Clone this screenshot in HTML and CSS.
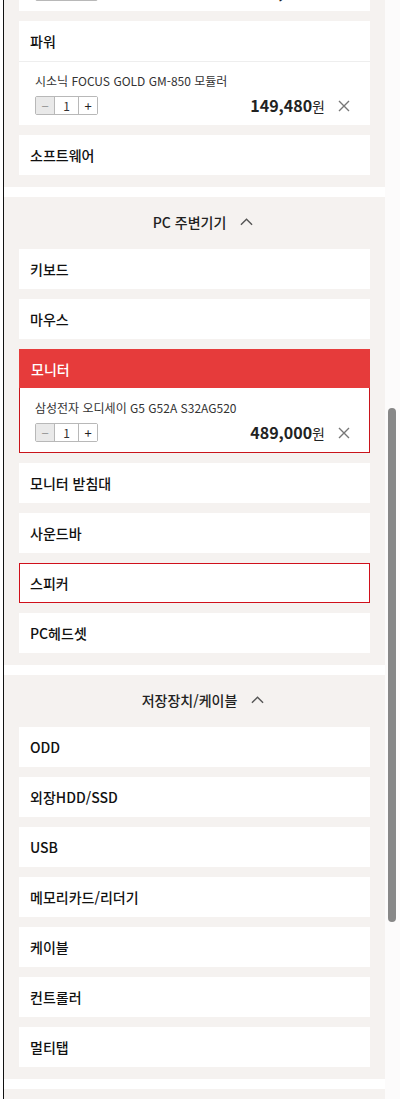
FILE: index.html
```html
<!DOCTYPE html>
<html lang="ko">
<head>
    <meta charset="UTF-8">
    <meta name="viewport" content="width=device-width, initial-scale=1.0">
    <title>견적 카테고리</title>
    <link rel="stylesheet" href="styles.css">
</head>
<body>
    <div class="frame">
        <div class="page">
            <!-- 파워 / 소프트웨어 묶음 (위쪽은 스크롤로 가려짐) -->
            <section class="group group-top">
                <div class="card">
                    <div class="card-title">케이스</div>
                    <div class="product">
                        <div class="product-name">앱코 SUITMASTER 케이스</div>
                        <div class="product-row">
                            <div class="stepper">
                                <button class="step minus">−</button>
                                <span class="qty">1</span>
                                <button class="step plus">+</button>
                            </div>
                            <div class="price"><b>59,000</b>원</div>
                            <span class="remove"><svg viewBox="0 0 12 12"><path d="M1 1L11 11M11 1L1 11"/></svg></span>
                        </div>
                    </div>
                </div>
                <div class="card">
                    <div class="card-title">파워</div>
                    <div class="product">
                        <div class="product-name">시소닉 FOCUS GOLD GM-850 모듈러</div>
                        <div class="product-row">
                            <div class="stepper">
                                <button class="step minus">−</button>
                                <span class="qty">1</span>
                                <button class="step plus">+</button>
                            </div>
                            <div class="price"><b>149,480</b>원</div>
                            <span class="remove"><svg viewBox="0 0 12 12"><path d="M1 1L11 11M11 1L1 11"/></svg></span>
                        </div>
                    </div>
                </div>
                <div class="card"><div class="card-title">소프트웨어</div></div>
            </section>

            <section class="group">
                <div class="group-head">
                    <span>PC 주변기기</span>
                    <svg class="chevron" viewBox="0 0 14 8"><path d="M1 7L7 1L13 7"/></svg>
                </div>
                <div class="card"><div class="card-title">키보드</div></div>
                <div class="card"><div class="card-title">마우스</div></div>
                <div class="card active">
                    <div class="card-title">모니터</div>
                    <div class="product">
                        <div class="product-name">삼성전자 오디세이 G5 G52A S32AG520</div>
                        <div class="product-row">
                            <div class="stepper">
                                <button class="step minus">−</button>
                                <span class="qty">1</span>
                                <button class="step plus">+</button>
                            </div>
                            <div class="price"><b>489,000</b>원</div>
                            <span class="remove"><svg viewBox="0 0 12 12"><path d="M1 1L11 11M11 1L1 11"/></svg></span>
                        </div>
                    </div>
                </div>
                <div class="card"><div class="card-title">모니터 받침대</div></div>
                <div class="card"><div class="card-title">사운드바</div></div>
                <div class="card selected"><div class="card-title">스피커</div></div>
                <div class="card"><div class="card-title">PC헤드셋</div></div>
            </section>

            <section class="group">
                <div class="group-head">
                    <span>저장장치/케이블</span>
                    <svg class="chevron" viewBox="0 0 14 8"><path d="M1 7L7 1L13 7"/></svg>
                </div>
                <div class="card"><div class="card-title">ODD</div></div>
                <div class="card"><div class="card-title">외장HDD/SSD</div></div>
                <div class="card"><div class="card-title">USB</div></div>
                <div class="card"><div class="card-title">메모리카드/리더기</div></div>
                <div class="card"><div class="card-title">케이블</div></div>
                <div class="card"><div class="card-title">컨트롤러</div></div>
                <div class="card"><div class="card-title">멀티탭</div></div>
            </section>

            <section class="group group-end"></section>
        </div>
        <div class="gutter"></div>
    </div>
    <div class="thumb"></div>
</body>
</html>
```

FILE: styles.css
```css
* {
    margin: 0;
    padding: 0;
    box-sizing: border-box;
}

body {
    font-family: "Noto Sans CJK KR", "Noto Sans", sans-serif;
    background: #fff;
    color: #111;
    width: 400px;
    height: 1099px;
    overflow: hidden;
    position: relative;
}

.frame {
    display: flex;
    padding-left: 3px;
}

.page {
    width: 382px;
    border-left: 1px solid #111;
    margin-top: -93px;
    display: flex;
    flex-direction: column;
    gap: 10px;
}

.gutter {
    flex: 1;
    background: #fcfbfb;
}

.group {
    background: #f5f2f0;
    padding: 0 15px 12px;
    display: flex;
    flex-direction: column;
    gap: 10px;
}

.group-end {
    height: 60px;
}

.group-head {
    height: 42px;
    display: flex;
    align-items: center;
    justify-content: center;
    gap: 14px;
    padding: 8px 0 0 17px;
    font-size: 14px;
    font-weight: 500;
    color: #222;
}

.chevron {
    width: 13px;
    height: 8px;
    fill: none;
    stroke: #555;
    stroke-width: 1.5;
}

.card {
    background: #fff;
}

.card-title {
    height: 40px;
    display: flex;
    align-items: center;
    padding-left: 11px;
    font-size: 14px;
    font-weight: 500;
    color: #111;
}

.card.active {
    border: 1px solid #c9141b;
}

.card.active .card-title {
    height: 39px;
    margin: -1px -1px 0;
    padding-left: 12px;
    background: #e63b3b;
    color: #fff;
}

.card.selected {
    border: 1px solid #d0101b;
}

.card.selected .card-title {
    height: 38px;
    padding-left: 10px;
}

.product {
    border-top: 1px solid #eee;
    padding: 10px 20px 10px 16px;
}

.card.active .product {
    border-top: none;
    padding: 11px 19px 10px 15px;
}

.product-name {
    font-size: 12px;
    color: #333;
    line-height: 17px;
}

.product-row {
    display: flex;
    align-items: center;
    height: 19px;
    margin-top: 7px;
}

.stepper {
    display: flex;
    height: 19px;
    border: 1px solid #b8b8b8;
    border-radius: 2px;
}

.step {
    width: 18px;
    border: none;
    background: #fff;
    font-family: inherit;
    font-size: 13px;
    color: #222;
    line-height: 17px;
}

.step.minus {
    background: #e9e9e9;
    color: #999;
}

.qty {
    width: 25px;
    border-left: 1px solid #b8b8b8;
    border-right: 1px solid #b8b8b8;
    text-align: center;
    font-size: 12px;
    line-height: 17px;
    color: #333;
}

.price {
    margin-left: auto;
    font-size: 14px;
    line-height: 19px;
    color: #222;
}

.price b {
    font-size: 16px;
    font-weight: 700;
}

.remove {
    width: 12px;
    height: 12px;
    margin-left: 13px;
    display: flex;
}

.remove svg {
    width: 12px;
    height: 12px;
    fill: none;
    stroke: #777;
    stroke-width: 1.4;
}

/* 스크롤바 손잡이 */
.thumb {
    position: absolute;
    left: 388px;
    top: 408px;
    width: 8px;
    height: 514px;
    border-radius: 4px;
    background: #888;
}
```
